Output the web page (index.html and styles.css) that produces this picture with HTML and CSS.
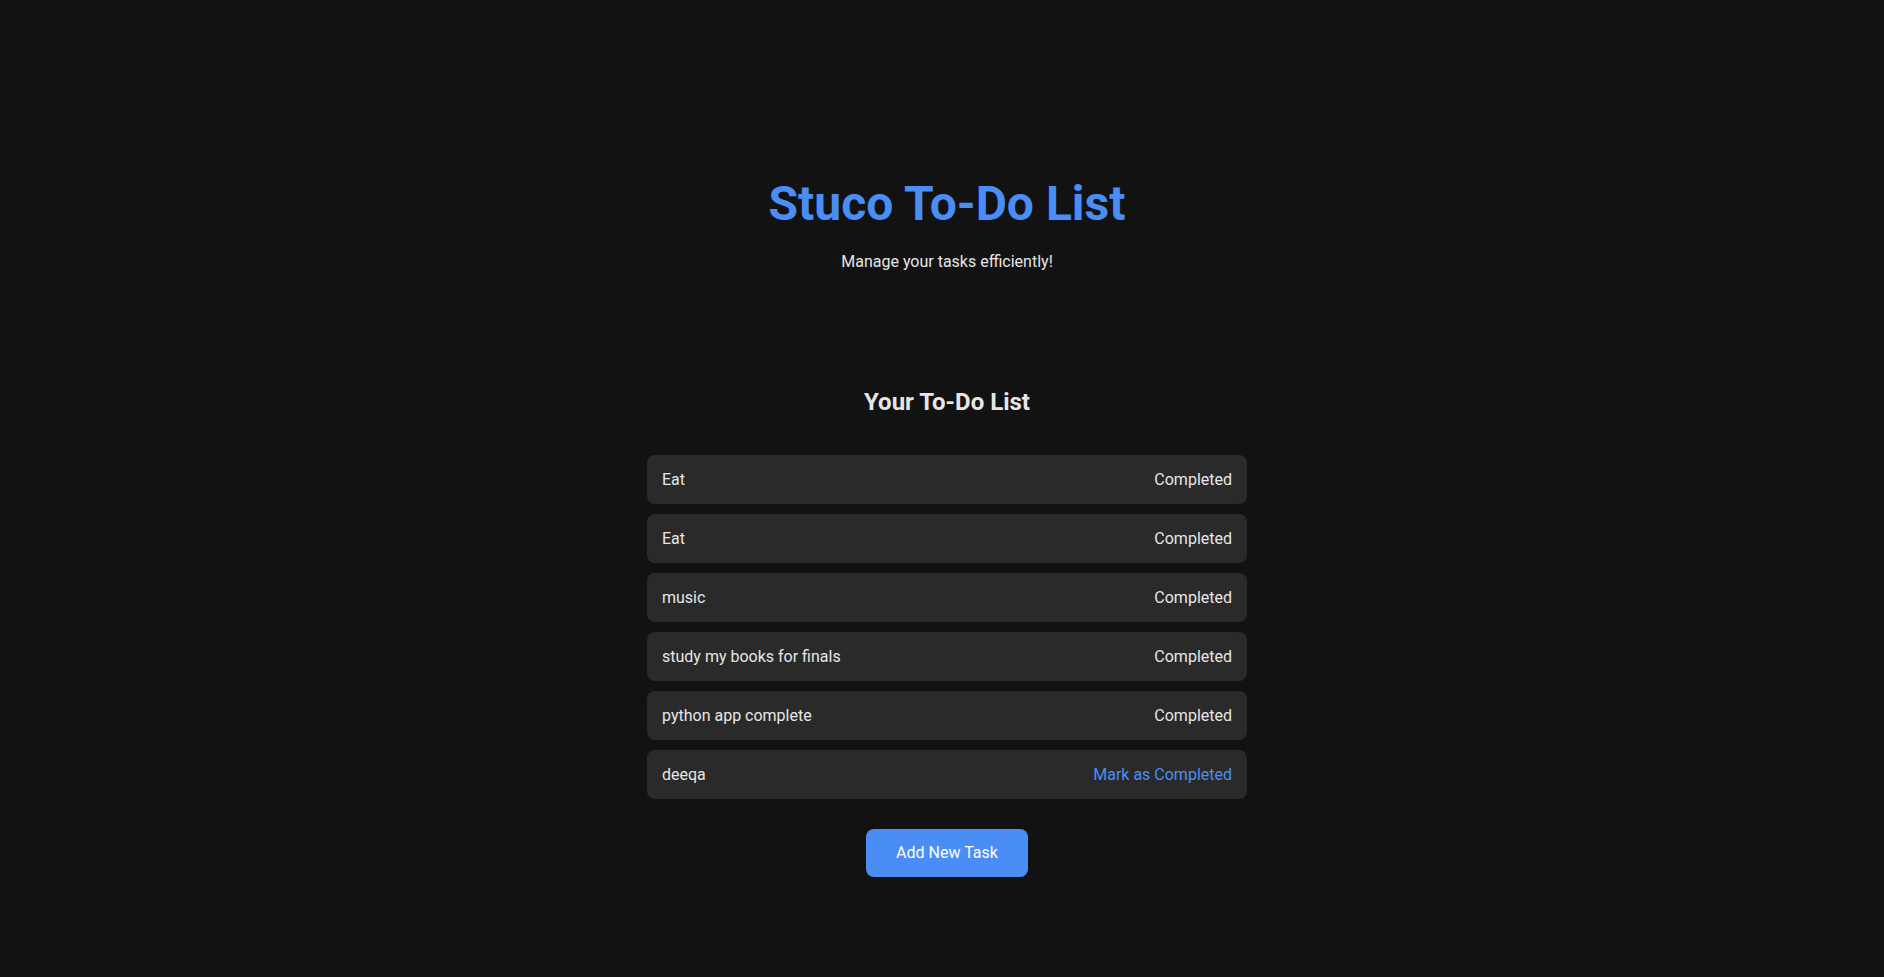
FILE: index.html
```html
<!DOCTYPE html>
<html lang="en">
<head>
<meta charset="utf-8">
<title>Stuco To-Do List</title>
<link rel="stylesheet" href="styles.css">
</head>
<body>
<div class="page">
  <header class="hero">
    <h1 class="hero-title">Stuco To-Do List</h1>
    <p class="hero-sub">Manage your tasks efficiently!</p>
  </header>
  <section class="todo">
    <h2 class="todo-title">Your To-Do List</h2>
    <ul class="todo-list">
      <li class="todo-item"><span class="todo-name">Eat</span><span class="todo-status">Completed</span></li>
      <li class="todo-item"><span class="todo-name">Eat</span><span class="todo-status">Completed</span></li>
      <li class="todo-item"><span class="todo-name">music</span><span class="todo-status">Completed</span></li>
      <li class="todo-item"><span class="todo-name">study my books for finals</span><span class="todo-status">Completed</span></li>
      <li class="todo-item"><span class="todo-name">python app complete</span><span class="todo-status">Completed</span></li>
      <li class="todo-item"><span class="todo-name">deeqa</span><a class="todo-action" href="#">Mark as Completed</a></li>
    </ul>
    <a class="add-btn" href="#">Add New Task</a>
  </section>
</div>
</body>
</html>
```

FILE: styles.css
```css
html, body {
  margin: 0;
  padding: 0;
  background: #121212;
}
body {
  font-family: Roboto, "Liberation Sans", Arial, sans-serif;
  color: #e0e0e0;
  font-size: 16px;
}
.page {
  padding-left: 10px;
  display: flex;
  flex-direction: column;
  align-items: center;
}
.hero {
  padding-top: 176px;
  text-align: center;
}
.hero-title {
  margin: 0;
  font-size: 48px;
  line-height: 56px;
  font-weight: 700;
  color: #4a8ef5;
}
.hero-sub {
  margin: 20px 0 0;
  font-size: 16px;
  line-height: 19px;
  color: #e6e6e6;
}
.todo {
  width: 600px;
  margin-top: 117px;
  display: flex;
  flex-direction: column;
  align-items: center;
}
.todo-title {
  margin: 0;
  font-size: 24px;
  line-height: 28px;
  font-weight: 700;
  color: #e6e6e6;
}
.todo-list {
  list-style: none;
  margin: 39px 0 0;
  padding: 0;
  width: 100%;
  display: flex;
  flex-direction: column;
  gap: 10px;
}
.todo-item {
  background: #2a2a2a;
  border-radius: 8px;
  padding: 15px;
  display: flex;
  justify-content: space-between;
  align-items: center;
  line-height: 19px;
}
.todo-name, .todo-status {
  color: #e6e6e6;
}
.todo-action {
  color: #4a8ef5;
  text-decoration: none;
}
.add-btn {
  margin-top: 30px;
  background: #4a8ef5;
  color: #ffffff;
  text-decoration: none;
  border-radius: 8px;
  padding: 15px 30px;
  line-height: 18px;
}
```
